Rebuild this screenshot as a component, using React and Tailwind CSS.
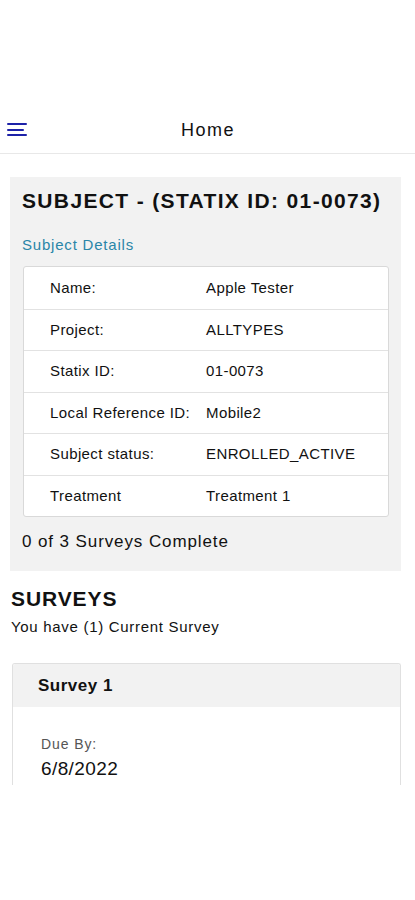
import React from "react";

const rows = [
  ["Name:", "Apple Tester"],
  ["Project:", "ALLTYPES"],
  ["Statix ID:", "01-0073"],
  ["Local Reference ID:", "Mobile2"],
  ["Subject status:", "ENROLLED_ACTIVE"],
  ["Treatment", "Treatment 1"],
];

export default function App() {
  return (
    <div className="w-[415px] h-[900px] bg-white overflow-hidden text-[#111]" style={{ fontFamily: '"Liberation Sans", Arial, sans-serif' }}>
      <div className="h-[105px]" />
      <header className="relative h-[49px] border-b border-[#e8e8e8] flex items-center justify-center">
        <button className="absolute left-[7px] top-[18px] flex flex-col gap-[3.5px]">
          <span className="block w-[20px] h-[2px] bg-[#1d22a8] rounded" />
          <span className="block w-[17px] h-[2px] bg-[#1d22a8] rounded" />
          <span className="block w-[20px] h-[2px] bg-[#1d22a8] rounded" />
        </button>
        <h1 className="text-[18px] font-medium tracking-[1.5px] text-[#111] mt-[2px] pl-[1px]">Home</h1>
      </header>

      <div className="h-[23px]" />

      <section className="mx-[10px] w-[391px] bg-[#f2f2f2] pl-[12px] pr-[10px] pt-[12px] pb-[19px]">
        <h2 className="text-[21px] font-bold leading-[24px] tracking-[1.35px] whitespace-nowrap">SUBJECT - (STATIX ID: 01-0073)</h2>
        <div className="mt-[23px] text-[15px] leading-[17px] tracking-[0.8px] text-[#2a86a8]">Subject Details</div>
        <div className="mt-[13px] ml-[1px] mr-[2px] bg-white border border-[#d9d9d9] rounded-[3px] overflow-hidden">
          {rows.map(([k, v], i) => (
            <div key={k} className={`flex items-center h-[41.5px] text-[15px] tracking-[0.4px] ${i > 0 ? "border-t border-[#e2e2e2]" : ""}`}>
              <div className="w-[182px] pl-[26px] shrink-0 whitespace-nowrap">{k}</div>
              <div className="whitespace-nowrap">{v}</div>
            </div>
          ))}
        </div>
        <div className="mt-[15px] text-[17px] leading-[20px] tracking-[0.9px]">0 of 3 Surveys Complete</div>
      </section>

      <div className="px-[11px] pt-[16px]">
        <h2 className="text-[21px] font-bold leading-[24px] tracking-[0.9px]">SURVEYS</h2>
        <div className="mt-[7px] text-[15px] leading-[17px] tracking-[0.7px]">You have (1) Current Survey</div>
      </div>

      <div className="mx-[12px] mt-[28px] w-[389px] h-[122px] border border-b-0 border-[#e0e0e0] rounded-t-[3px] overflow-hidden">
        <div className="h-[43px] bg-[#f2f2f2] flex items-center pl-[25px]">
          <span className="text-[17px] font-bold tracking-[0.5px]">Survey 1</span>
        </div>
        <div className="pl-[28px] pt-[29px]">
          <div className="text-[14px] leading-[16px] tracking-[0.9px] text-[#555]">Due By:</div>
          <div className="mt-[6px] text-[19px] leading-[22px] tracking-[0.4px]">6/8/2022</div>
        </div>
      </div>
    </div>
  );
}
